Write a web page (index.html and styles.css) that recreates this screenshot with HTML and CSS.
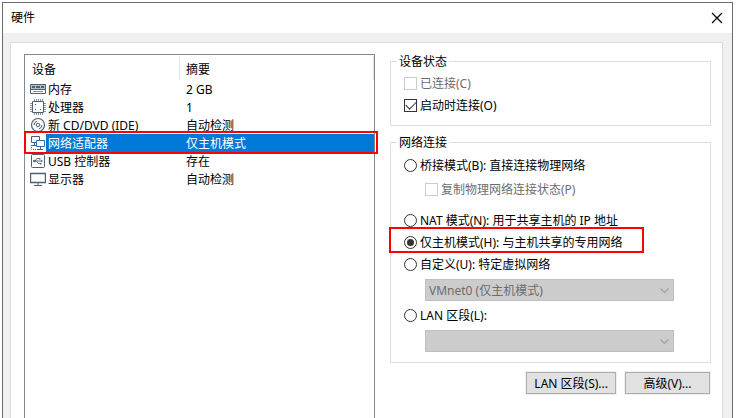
FILE: index.html
```html
<!DOCTYPE html>
<html lang="zh-CN">
<head>
    <meta charset="UTF-8">
    <meta name="viewport" content="width=device-width, initial-scale=1.0">
    <title>硬件</title>
    <link rel="stylesheet" href="styles.css">
</head>
<body>

    <div class="window">
        <!-- 标题栏 -->
        <div class="titlebar">
            <h1>硬件</h1>
            <button type="button" class="close" aria-label="关闭">
                <svg width="12" height="12" viewBox="0 0 12 12"><path d="M1 1L11 11M11 1L1 11" stroke="#000" stroke-width="1.2" fill="none"/></svg>
            </button>
        </div>

        <div class="panel">
            <!-- 设备列表 -->
            <div class="devices">
                <table>
                    <thead>
                        <tr>
                            <th colspan="2"><span>设备</span></th>
                            <th><span>摘要</span></th>
                        </tr>
                    </thead>
                    <tbody>
                        <tr>
                            <td class="icon">
                                <svg viewBox="0 0 16 16"><path d="M.5 3.500H15.500V12.500H.5Z" fill="#fff" stroke="#4d6172"/><path d="M1 4H15V8H1Z" fill="#b4bec7"/><path d="M2 5H5V7H2ZM6 5H10V7H6ZM11 5H14V7H11Z" fill="#4d6172"/><path d="M1 8.500H15" stroke="#4d6172"/><path d="M3 10.500H13" stroke="#8795a1"/></svg>
                            </td>
                            <td class="name">内存</td>
                            <td class="summary">2 GB</td>
                        </tr>
                        <tr>
                            <td class="icon">
                                <svg viewBox="0 0 16 16"><path d="M4.500 0V3M6.500 0V3M8.500 0V3M10.500 0V3M12.500 0V3M4.500 13V16M6.500 13V16M8.500 13V16M10.500 13V16M12.500 13V16M0 4.500H3M0 6.500H3M0 8.500H3M0 10.500H3M0 12.500H3M13 4.500H16M13 6.500H16M13 8.500H16M13 10.500H16M13 12.500H16" stroke="#8795a1"/><path d="M2.500 2.500H13.500V13.500H2.500Z" fill="#fff" stroke="#4d6172"/><path d="M5 5H6V6H5ZM10 10H11V11H10ZM5 10H6V11H5Z" fill="#4d6172"/></svg>
                            </td>
                            <td class="name">处理器</td>
                            <td class="summary">1</td>
                        </tr>
                        <tr>
                            <td class="icon">
                                <svg viewBox="0 0 16 16"><circle cx="8" cy="8" r="6.500" fill="#fff" stroke="#4d6172" stroke-width="1.200"/><circle cx="8" cy="8" r="1.800" fill="none" stroke="#4d6172"/><path d="M4 8A4 4 0 0 1 7 4.200M12 8A4 4 0 0 1 9 11.800" fill="none" stroke="#4d6172"/></svg>
                            </td>
                            <td class="name">新 CD/DVD (IDE)</td>
                            <td class="summary">自动检测</td>
                        </tr>
                        <tr class="selected">
                            <td class="icon">
                                <svg viewBox="0 0 16 16"><path d="M1.500 1.500H9.500V7.500H1.500Z" fill="#fff" stroke="#4d6172"/><path d="M4.500 8V10M2 10.500H6" stroke="#4d6172"/><path d="M6.500 5.500H14.500V11.500H6.500Z" fill="#fff" stroke="#2d6da3"/><path d="M10.500 12V14M8 14.500H13" stroke="#2d6da3"/><path d="M1.500 10V14.500H8" fill="none" stroke="#4d6172" stroke-dasharray="1 1"/></svg>
                            </td>
                            <td class="name">网络适配器</td>
                            <td class="summary">仅主机模式</td>
                        </tr>
                        <tr>
                            <td class="icon">
                                <svg viewBox="0 0 16 16"><rect x="1.500" y="1.500" width="13" height="13" rx="1" fill="#fff" stroke="#4d6172"/><path d="M3 8H12M5 8L7 5.500H9M6.500 8L8.500 10.500H11" fill="none" stroke="#65727d"/><circle cx="4.500" cy="8" r="1.200" fill="#4d6172"/><path d="M11 6.500L13 8L11 9.500ZM9 5H10.500V6.500H9ZM10 10H11.500V11.500H10Z" fill="#65727d"/></svg>
                            </td>
                            <td class="name">USB 控制器</td>
                            <td class="summary">存在</td>
                        </tr>
                        <tr>
                            <td class="icon">
                                <svg viewBox="0 0 16 16"><path d="M.5 2.500H15.500V11.500H.5Z" fill="#fff" stroke="#4d6172" stroke-width="1.400"/><path d="M8 12V14M4 14.500H12" fill="none" stroke="#4d6172"/></svg>
                            </td>
                            <td class="name">显示器</td>
                            <td class="summary">自动检测</td>
                        </tr>
                    </tbody>
                </table>
                <div class="mark mark-device"></div>
            </div>

            <!-- 右侧设置 -->
            <form class="settings">
                <fieldset class="status">
                    <legend>设备状态</legend>
                    <div class="row disabled">
                        <input type="checkbox" id="connected" disabled>
                        <label for="connected">已连接(C)</label>
                    </div>
                    <div class="row">
                        <input type="checkbox" id="power-on" checked>
                        <label for="power-on">启动时连接(O)</label>
                    </div>
                </fieldset>

                <fieldset class="network">
                    <legend>网络连接</legend>
                    <div class="row">
                        <input type="radio" name="mode" id="bridged">
                        <label for="bridged">桥接模式(B): 直接连接物理网络</label>
                    </div>
                    <div class="row sub disabled">
                        <input type="checkbox" id="replicate" disabled>
                        <label for="replicate">复制物理网络连接状态(P)</label>
                    </div>
                    <div class="row nat">
                        <input type="radio" name="mode" id="nat">
                        <label for="nat">NAT 模式(N): 用于共享主机的 IP 地址</label>
                    </div>
                    <div class="row">
                        <input type="radio" name="mode" id="host-only" checked>
                        <label for="host-only">仅主机模式(H): 与主机共享的专用网络</label>
                        <div class="mark mark-mode"></div>
                    </div>
                    <div class="row">
                        <input type="radio" name="mode" id="custom">
                        <label for="custom">自定义(U): 特定虚拟网络</label>
                    </div>
                    <div class="select">
                        <select aria-label="特定虚拟网络" disabled>
                            <option>VMnet0 (仅主机模式)</option>
                        </select>
                        <svg width="9" height="6" viewBox="0 0 9 6"><path d="M.5 .5L4.500 4.500L8.500 .5" fill="none" stroke="#a0a0a0" stroke-width="1.200"/></svg>
                    </div>
                    <div class="row lan">
                        <input type="radio" name="mode" id="lan">
                        <label for="lan">LAN 区段(L):</label>
                    </div>
                    <div class="select">
                        <select aria-label="LAN 区段" disabled>
                            <option></option>
                        </select>
                        <svg width="9" height="6" viewBox="0 0 9 6"><path d="M.5 .5L4.500 4.500L8.500 .5" fill="none" stroke="#a0a0a0" stroke-width="1.200"/></svg>
                    </div>
                </fieldset>

                <div class="buttons">
                    <button type="button" class="btn">LAN 区段(S)...</button>
                    <button type="button" class="btn">高级(V)...</button>
                </div>
            </form>
        </div>
    </div>

</body>
</html>
```
FILE: styles.css
```css
*{
    box-sizing: border-box;
}

body{
    margin: 0;
    padding: 2px 4px 0 2px;
    background-color: #fff;
    color: #000;
}

body, button, select{
    font-family: "Noto Sans", "Noto Sans CJK SC", sans-serif;
    font-size: 12px;
    line-height: 18px;
}

.window{
    display: flex;
    flex-direction: column;
    min-height: calc(100vh - 2px);
    border: 1px solid #6d6d6d;
    border-bottom: 0;
    background-color: #f0f0f0;
}

/* 标题栏 */
.titlebar{
    display: flex;
    align-items: center;
    justify-content: space-between;
    height: 30px;
    padding: 0 9px 0 8px;
    background-color: #fff;
}

.titlebar h1{
    margin: 0;
    font-size: 12px;
    font-weight: normal;
}

.close{
    display: flex;
    padding: 0;
    border: 0;
    background: none;
}

.panel{
    flex: 1;
    display: flex;
    gap: 15px;
    margin: 9px 9px 0 7px;
    padding: 11px 11px 0 13px;
    border: 1px solid #dcdcdc;
    border-bottom: 0;
    background-color: #fff;
}

/* 设备列表 */
.devices{
    flex: 349;
    position: relative;
    border: 1px solid #828790;
    border-bottom: 0;
}

table{
    width: 100%;
    border-collapse: collapse;
}

th{
    height: 25px;
    padding: 0;
    font-weight: normal;
    text-align: left;
}

th span{
    display: block;
    padding: 5px 0 1px 7px;
    border-right: 1px solid #e5e5e5;
}

th + th span{
    padding-left: 6px;
}

td{
    height: 18px;
    padding: 2px 0 0;
    line-height: 16px;
    white-space: nowrap;
}

td.icon{
    width: 21px;
    padding: 0 0 0 5px;
}

.icon svg{
    display: block;
    width: 16px;
    height: 16px;
}

.name{
    width: 134px;
    padding-left: 2px;
}

.summary{
    padding-left: 6px;
}

.selected .name, .selected .summary{
    background-color: #0078d7;
    color: #fff;
}

/* 红色标记框 */
.mark{
    position: absolute;
    border: 2px solid #f00;
    pointer-events: none;
}

.mark-device{
    top: 76px;
    left: -1px;
    right: -4px;
    height: 23px;
}

.mark-mode{
    top: -4px;
    left: -15px;
    width: 255px;
    height: 26px;
}

/* 设置 */
.settings{
    flex: 321;
    min-width: 0;
    margin-top: -1px;
}

fieldset{
    min-width: 0;
    margin: 0;
    border: 1px solid #dcdcdc;
}

legend{
    height: 17px;
    margin-left: -7px;
    padding: 0 2px;
    line-height: 18px;
}

.status{
    padding: 2px 13px 9px;
}

.network{
    margin-top: 8px;
    padding: 3px 13px 10px;
}

.row{
    position: relative;
    display: flex;
    align-items: center;
    gap: 3px;
    height: 22px;
    white-space: nowrap;
}

.row label{
    padding-top: 2px;
}

.disabled{
    color: #6d6d6d;
}

.sub{
    margin: 2px 0 0 21px;
}

.nat{
    margin-top: 9px;
}

.lan{
    margin-top: 3px;
}

input{
    appearance: none;
    flex: none;
    display: grid;
    place-items: center;
    width: 13px;
    height: 13px;
    margin: 0;
    border: 1px solid #333;
    background-color: #fff;
}

input:disabled{
    border-color: #ccc;
}

input[type=radio]{
    border-radius: 50%;
}

input[type=radio]:checked::before{
    content: "";
    width: 7px;
    height: 7px;
    border-radius: 50%;
    background-color: #333;
}

input[type=checkbox]:checked::before{
    content: "";
    width: 9px;
    height: 5px;
    margin-bottom: 3px;
    border: solid #333;
    border-width: 0 0 1px 1px;
    transform: rotate(-45deg);
}

.select{
    position: relative;
    margin: 4px 23px 0 21px;
}

.select select{
    appearance: none;
    display: block;
    width: 100%;
    height: 22px;
    padding: 2px 20px 0 3px;
    border: 1px solid #bfbfbf;
    border-radius: 0;
    background-color: #ccc;
    color: #6d6d6d;
    opacity: 1;
}

.select svg{
    position: absolute;
    top: 9px;
    right: 5px;
}

.buttons{
    display: flex;
    justify-content: flex-end;
    gap: 9px;
    margin-top: 9px;
    padding-right: 1px;
}

.btn{
    height: 22px;
    min-width: 85px;
    padding: 2px 7px 0;
    border: 1px solid #adadad;
    background-color: #e1e1e1;
    color: #000;
    line-height: 18px;
    white-space: nowrap;
    box-shadow: 0 0 0 1px #f0f0f0;
}
```
